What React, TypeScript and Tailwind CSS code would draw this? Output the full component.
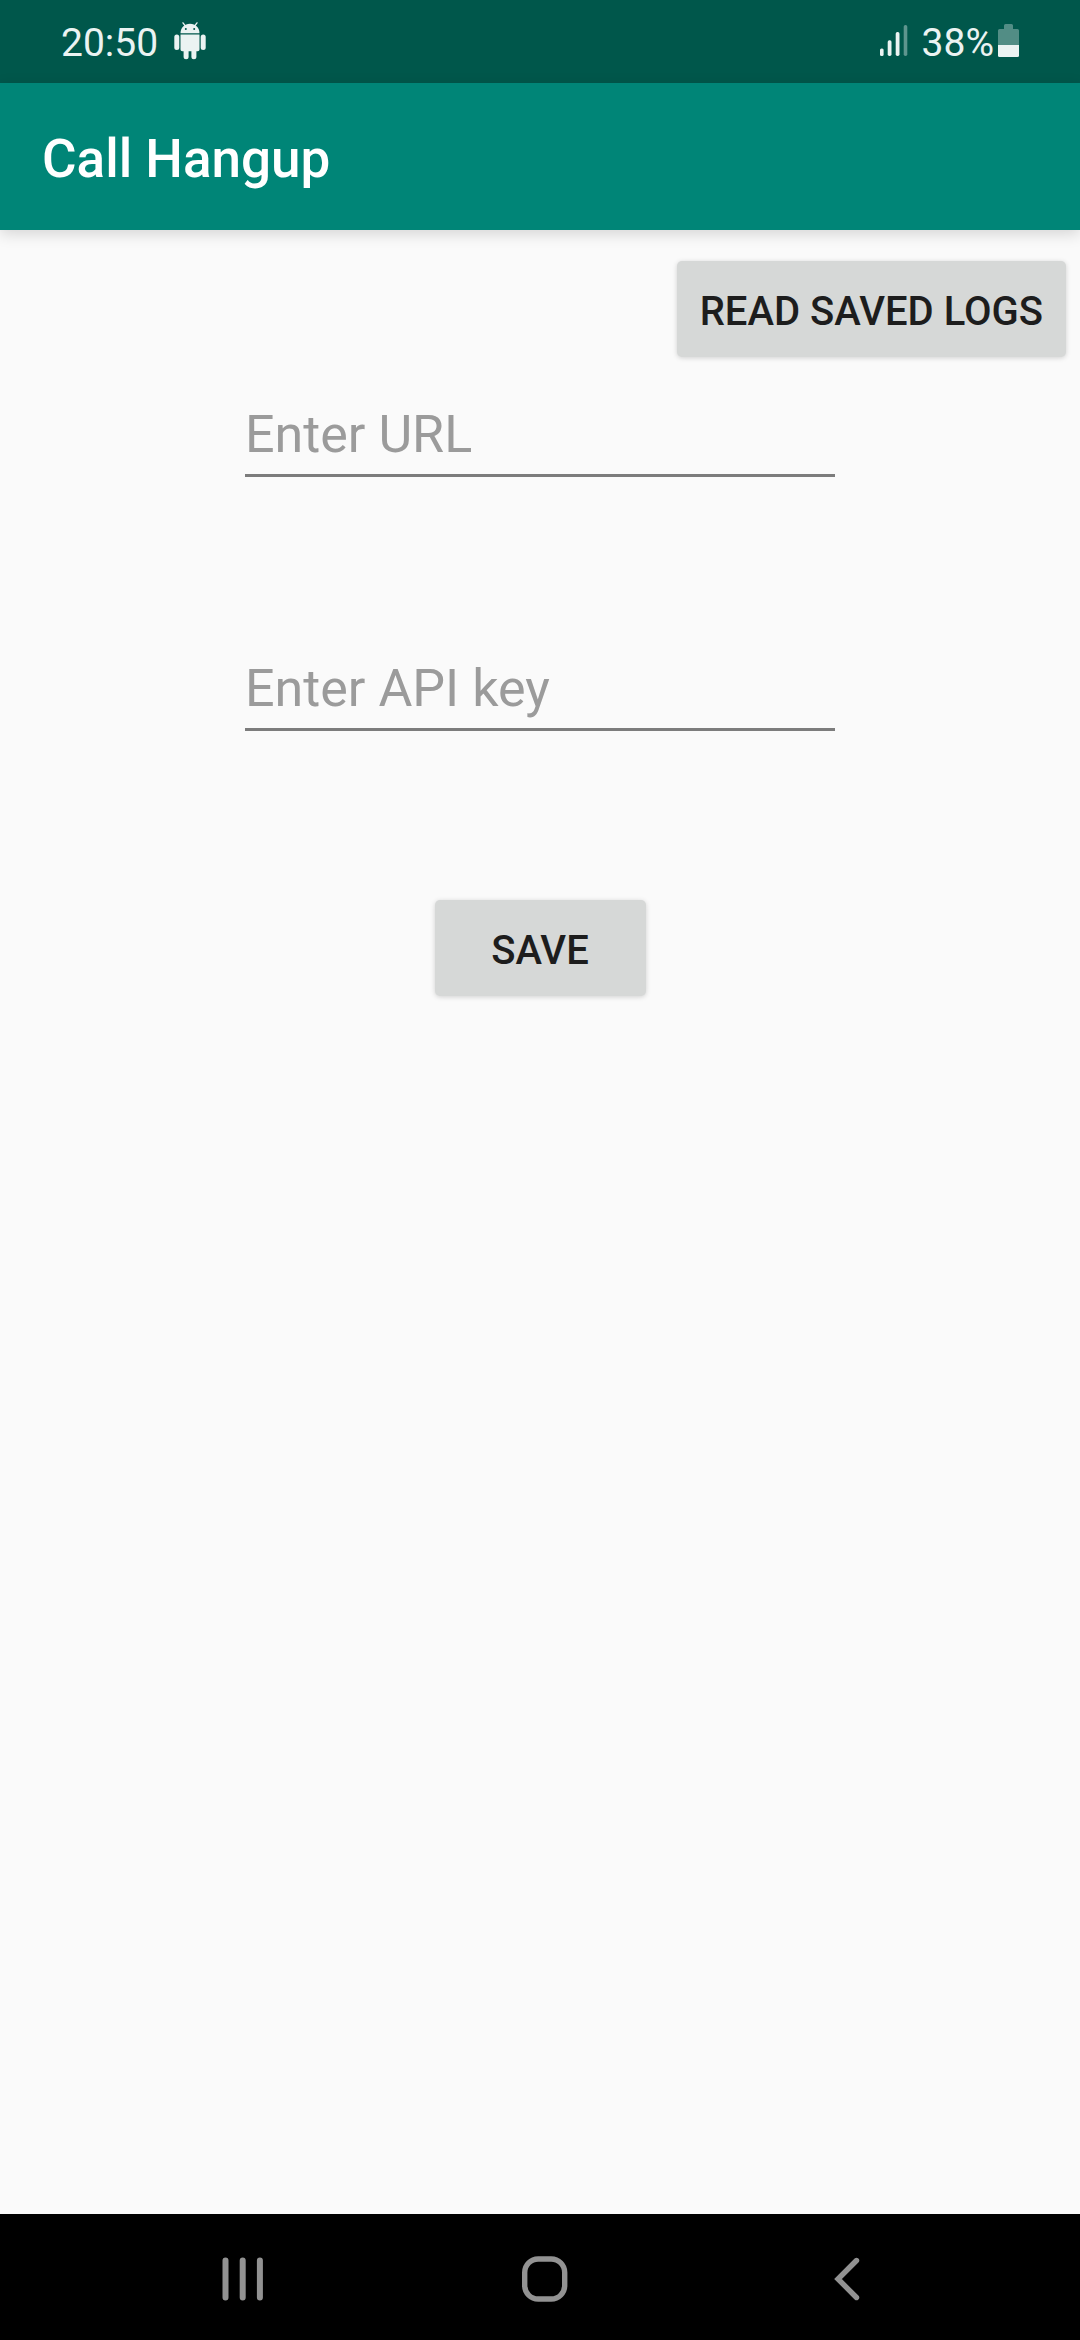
import React from "react";

function AndroidIcon() {
  return (
    <svg width="32" height="38" viewBox="0 0 32 38" fill="#ebf3f2" aria-hidden="true">
      <path d="M6.500 11.300C6.500 5.800 10.500 1.800 16 1.800s9.500 4 9.500 9.500z" />
      <path d="M9 .9l3 4M23 .9l-3 4" stroke="#ebf3f2" strokeWidth="1.400" strokeLinecap="round" />
      <circle cx="11.800" cy="7" r="1" fill="#00574b" />
      <circle cx="20.200" cy="7" r="1" fill="#00574b" />
      <path d="M6.500 12.600h19v14.900a1.800 1.800 0 0 1-1.800 1.800H8.300a1.800 1.800 0 0 1-1.800-1.800z" />
      <rect x="0.300" y="12.400" width="5" height="15.600" rx="2.500" />
      <rect x="26.700" y="12.400" width="5" height="15.600" rx="2.500" />
      <rect x="9.600" y="24" width="5" height="13.300" rx="2.500" />
      <rect x="17.400" y="24" width="5" height="13.300" rx="2.500" />
    </svg>
  );
}

function SignalIcon() {
  return (
    <svg width="28" height="31" viewBox="0 0 28 31" fill="#ebf3f2" aria-hidden="true">
      <rect x="0" y="23.500" width="3.600" height="7.500" rx="1.500" />
      <rect x="7.700" y="15.300" width="3.800" height="15.700" rx="1.700" />
      <rect x="15.700" y="7" width="3.800" height="24" rx="1.700" />
      <rect x="23.700" y="0" width="3.600" height="31" rx="1.700" fillOpacity="0.400" />
    </svg>
  );
}

function BatteryIcon() {
  return (
    <svg width="21" height="33" viewBox="0 0 21 33" aria-hidden="true">
      <path
        d="M6 1.500A1.500 1.500 0 0 1 7.500 0h6A1.500 1.500 0 0 1 15 1.500V5h4.500A1.500 1.500 0 0 1 21 6.500V21H0V6.500A1.500 1.500 0 0 1 1.500 5H6z"
        fill="#528d85"
      />
      <path d="M0 21h21v10.500a1.500 1.500 0 0 1-1.500 1.500h-18A1.500 1.500 0 0 1 0 31.500z" fill="#ebf3f2" />
    </svg>
  );
}

function StatusBar() {
  return (
    <div className="flex h-[83px] items-center justify-between bg-[#00574b] pr-[61px] pb-[2px] pl-[61px] text-[39px] leading-[46px] text-[#ebf3f2]">
      <div className="flex items-center gap-4">
        <span className="pt-1">20:50</span>
        <AndroidIcon />
      </div>
      <div className="flex items-center">
        <SignalIcon />
        <span className="ml-[14px] mr-1 pt-1">38%</span>
        <BatteryIcon />
      </div>
    </div>
  );
}

function Field({ id, label }: { id: string; label: string }) {
  return (
    <div className="mx-auto w-[590px] max-w-full">
      <input
        id={id}
        type="text"
        aria-label={label}
        placeholder={label}
        className="block h-[90px] w-full rounded-none border-b-[3px] border-[#7c7c7c] bg-transparent pt-2 text-[52px] leading-[72px] text-[#212121] outline-none placeholder:text-[#9b9b9b]"
      />
    </div>
  );
}

function RaisedButton({ children }: { children: React.ReactNode }) {
  return (
    <button
      type="button"
      className="h-24 min-w-[211px] rounded-[5px] bg-[#d6d8d7] px-[23px] pt-[6px] text-[40px] leading-[48px] font-medium text-[#1d1d1d] uppercase shadow-[0_1px_5px_rgba(0,0,0,0.17)]"
    >
      {children}
    </button>
  );
}

function NavBar() {
  return (
    <nav className="grid h-[126px] grid-cols-3 bg-black pr-[82px] pl-[92px]">
      <button type="button" aria-label="Recent apps" className="flex items-center justify-center pt-1">
        <svg width="48" height="48" viewBox="0 0 48 48" fill="none" stroke="#929292" strokeWidth="6" strokeLinecap="round">
          <path d="M6.500 5.500v37M23.700 5.500v37M40.900 5.500v37" />
        </svg>
      </button>
      <button type="button" aria-label="Home" className="flex items-center justify-center pt-1">
        <svg width="48" height="48" viewBox="0 0 48 48" fill="none" stroke="#929292" strokeWidth="5.400">
          <rect x="3.700" y="4" width="40" height="40" rx="13.500" />
        </svg>
      </button>
      <button type="button" aria-label="Back" className="flex items-center justify-center pt-1">
        <svg width="48" height="48" viewBox="0 0 48 48" fill="none" stroke="#929292" strokeWidth="5.400" strokeLinecap="round">
          <path d="M33.500 5.500L15 24l18.500 18.500" />
        </svg>
      </button>
    </nav>
  );
}

export default function App() {
  return (
    <div className="flex min-h-screen flex-col bg-[#fafafa] font-['Roboto',sans-serif]">
      <StatusBar />
      <header className="flex h-[147px] items-center bg-[#008577] px-[42px] pt-1 shadow-[0_4px_14px_rgba(0,0,0,0.15)]">
        <h1 className="text-[53px] leading-[62px] font-medium text-white">Call Hangup</h1>
      </header>
      <main className="flex grow flex-col">
        <div className="flex justify-end pt-[31px] pr-[14px]">
          <RaisedButton>Read saved logs</RaisedButton>
        </div>
        <form className="flex flex-col pt-[30px]" onSubmit={(e) => e.preventDefault()}>
          <Field id="url" label="Enter URL" />
          <div className="pt-[164px]">
            <Field id="api-key" label="Enter API key" />
          </div>
          <div className="flex justify-center pt-[169px]">
            <RaisedButton>Save</RaisedButton>
          </div>
        </form>
      </main>
      <NavBar />
    </div>
  );
}
